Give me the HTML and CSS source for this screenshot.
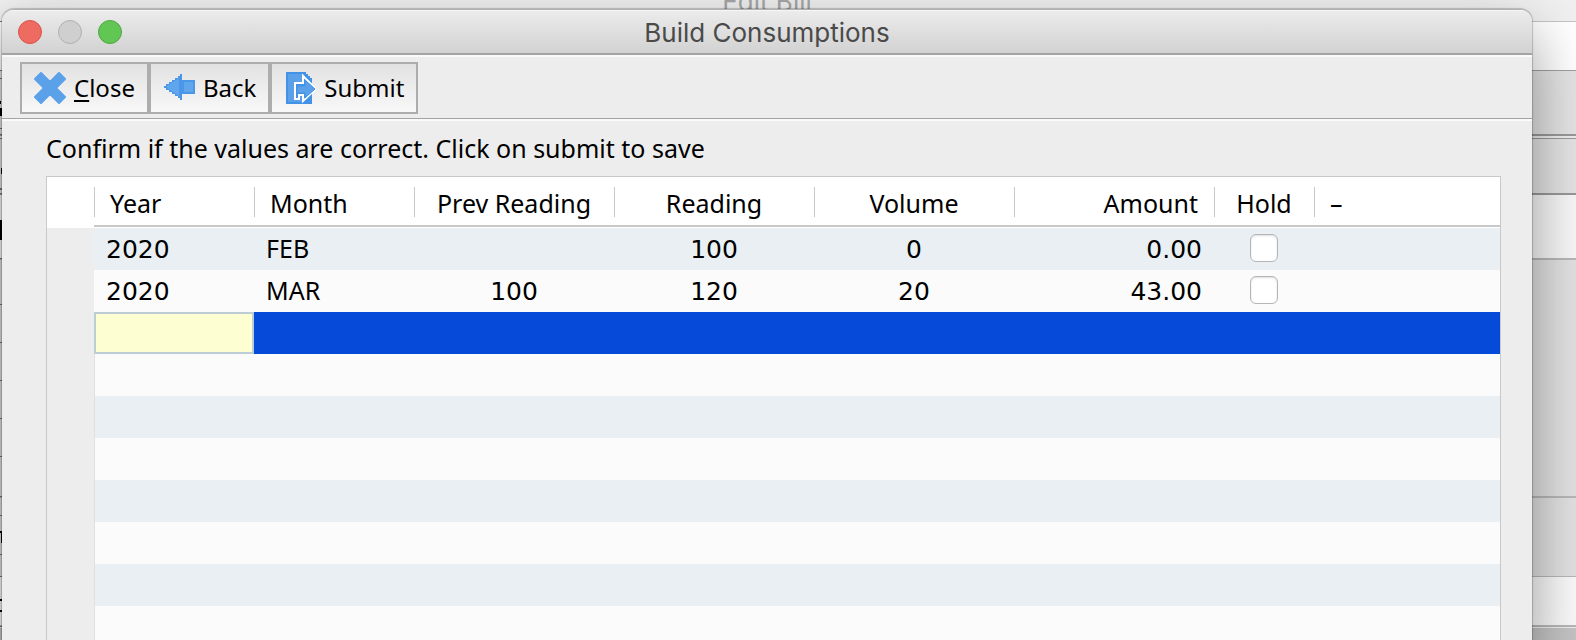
FILE: index.html
```html
<!DOCTYPE html>
<html lang="en">
<head>
<meta charset="utf-8">
<title>Build Consumptions</title>
<link rel="stylesheet" href="styles.css">
</head>
<body>
<div class="rear" aria-hidden="true">
  <div class="rear-title">Edit Bill</div>
  <div class="rear-row rear-tools"></div>
  <div class="rear-row rear-band"></div>
  <div class="rear-gap"></div>
  <div class="rear-row rear-heading"></div>
  <div class="rear-row rear-field"></div>
  <div class="rear-row rear-body"></div>
  <div class="rear-row rear-foot"></div>
  <div class="rear-row rear-entry"></div>
  <div class="rear-end"></div>
  <svg class="rear-marks" width="2" height="640" viewBox="0 0 2 640">
    <path fill="#777" d="M0 21h2v1H0zM0 70h2v1H0zM0 78h2v1H0zM0 128h2v1H0zM0 134h2v1H0zM0 138h2v1H0zM0 188h2v2H0zM0 193h2v1H0zM0 258h2v1H0zM0 304h2v1H0zM0 342h2v1H0zM0 380h2v1H0zM0 418h2v1H0zM0 456h2v1H0zM0 496h2v1H0zM0 515h2v1H0zM0 554h2v1H0zM0 576h2v1H0zM0 626h2v1H0z"/>
    <path fill="#000" d="M0 101h1v3H0zM0 108h2v8H0zM1 168h1v6H1zM0 220h2v20H0zM0 531h2v2H0zM1 533h1v10H1zM0 599h2v2H0zM0 610h2v2H0z"/>
  </svg>
</div>

<main class="dialog">
  <header class="titlebar">
    <div class="lights">
      <button class="light red" type="button" aria-label="Close window"></button>
      <button class="light idle" type="button" aria-label="Minimize" disabled></button>
      <button class="light green" type="button" aria-label="Zoom window"></button>
    </div>
    <h1 class="title">Build Consumptions</h1>
  </header>

  <div class="toolbar">
    <button class="tool" type="button">
      <svg class="icon" width="32" height="32" viewBox="0 0 32 32" aria-hidden="true"><path fill="#5ba1ea" stroke="#5ba1ea" stroke-width="2" stroke-linejoin="round" d="M7 1l9 9 9-9 6 6-9 9 9 9-6 6-9-9-9 9-6-6 9-9-9-9z"/></svg>
      <span><u>C</u>lose</span>
    </button>
    <button class="tool" type="button">
      <svg class="icon" width="32" height="32" viewBox="-1 0 32 32" aria-hidden="true"><path fill="#4a96e8" d="M0 14h2v-2h3v-2h3V8h3V6h3V4h2V2h2v6h13v14H18v6h-2v-2h-2v-2h-3v-2H8v-2H5v-2H2v-2H0z"/><path fill="#5fa6ed" d="M3 14l12-8v18L3 16zM20 10h9v10h-9z"/></svg>
      <span>Back</span>
    </button>
    <button class="tool" type="button">
      <svg class="icon" width="32" height="32" viewBox="-2 0 32 32" aria-hidden="true"><path fill="#4293e8" d="M0 0h20v2h2v2h2v2h2v26H0z"/><path fill="#5ba1ea" d="M2 2h16v28H2z"/><path fill="#4293e8" stroke="#fff" stroke-width="2" d="M9 27V11h8V4l13 13-13 12v-6h-4v4z"/><path fill="#5ba1ea" stroke="#4293e8" stroke-width="1" d="M11 14h8V8l10 9-10 9v-5h-8z"/></svg>
      <span>Submit</span>
    </button>
  </div>

  <section class="content">
    <p class="message">Confirm if the values are correct. Click on submit to save</p>
    <div class="grid">
      <table class="records">
        <colgroup>
          <col class="c-gutter"><col class="c-date"><col class="c-date"><col class="c-num"><col class="c-num"><col class="c-num"><col class="c-num"><col class="c-hold"><col>
        </colgroup>
        <thead>
          <tr>
            <td class="corner"></td>
            <th scope="col">Year</th>
            <th scope="col">Month</th>
            <th scope="col" class="center">Prev Reading</th>
            <th scope="col" class="center">Reading</th>
            <th scope="col" class="center">Volume</th>
            <th scope="col" class="right">Amount</th>
            <th scope="col" class="center hold">Hold</th>
            <th scope="col">–</th>
          </tr>
        </thead>
        <tbody>
          <tr>
            <td class="gutter"></td><td class="num">2020</td><td>FEB</td><td></td><td class="num center">100</td><td class="num center">0</td><td class="num right">0.00</td>
            <td class="center hold"><input class="check" type="checkbox" aria-label="Hold FEB 2020"></td><td></td>
          </tr>
          <tr>
            <td class="gutter"></td><td class="num">2020</td><td>MAR</td><td class="num center">100</td><td class="num center">120</td><td class="num center">20</td><td class="num right">43.00</td>
            <td class="center hold"><input class="check" type="checkbox" aria-label="Hold MAR 2020"></td><td></td>
          </tr>
          <tr class="selected">
            <td class="gutter"></td><td class="edit"><input class="year" type="text" aria-label="Year"></td><td colspan="7"></td>
          </tr>
          <tr><td class="gutter"></td><td class="blank" colspan="8"></td></tr>
          <tr><td class="gutter"></td><td class="blank" colspan="8"></td></tr>
          <tr><td class="gutter"></td><td class="blank" colspan="8"></td></tr>
          <tr><td class="gutter"></td><td class="blank" colspan="8"></td></tr>
          <tr><td class="gutter"></td><td class="blank" colspan="8"></td></tr>
          <tr><td class="gutter"></td><td class="blank" colspan="8"></td></tr>
          <tr><td class="gutter"></td><td class="blank" colspan="8"></td></tr>
        </tbody>
      </table>
    </div>
  </section>
</main>
</body>
</html>
```

FILE: styles.css
```css
* { box-sizing: border-box; }

body {
  margin: 0;
  min-height: 100vh;
  overflow: hidden;
  display: flex;
  background: #dedede;
  color: #000;
  font-family: "Noto Sans", "Open Sans", sans-serif;
  font-size: 25px;
  line-height: 32px;
}

/* window behind the dialog */
.rear {
  position: absolute;
  inset: 0;
  overflow: hidden;
  display: flex;
  flex-direction: column;
  background: #dedede;
}
.rear-title {
  height: 22px;
  flex: none;
  display: flex;
  align-items: flex-end;
  justify-content: center;
  padding-right: 42px;
  padding-bottom: 3px;
  border-bottom: 1px solid #c4c4c4;
  background: #f0f0f0;
  color: #a6a6a6;
  font-family: Inter, Roboto, sans-serif;
  font-size: 26px;
}
.rear-row { flex: none; border-bottom: 2px solid #b8b8b8; }
.rear-tools { height: 49px; background: #fff; border-bottom: 1px solid #a0a0a0; }
.rear-band { height: 65px; background: #e4e4e4; border-bottom-color: #999; }
.rear-gap { height: 3px; flex: none; background: #eee; border-bottom: 1px solid #999; }
.rear-heading { height: 56px; background: #e4e4e4; border-bottom-color: #999; }
.rear-field { height: 65px; background: #f8f8f8; }
.rear-body { height: 238px; background: #e2e2e2; }
.rear-foot { height: 79px; background: #e2e2e2; border-bottom-width: 1px; }
.rear-entry { height: 50px; background: #fafafa; }
.rear-end { flex: 1; background: #c4c4c4; border-top: 1px solid #eee; }
.rear-marks { position: absolute; left: 0; top: 0; }

/* dialog */
.dialog {
  position: relative;
  flex: 1;
  min-width: 0;
  height: 100vh;
  overflow: hidden;
  margin: 9px 44px 0 2px;
  display: flex;
  flex-direction: column;
  border-top: 1px solid #b0b0b0;
  border-radius: 12px 12px 0 0;
  background: #ededed;
  box-shadow: 0 0 1px 1px rgba(0, 0, 0, 0.2), 0 24px 60px rgba(0, 0, 0, 0.4);
}
.titlebar {
  flex: none;
  display: grid;
  grid-template-columns: 1fr auto 1fr;
  align-items: center;
  height: 45px;
  padding: 0 16px;
  border-bottom: 2px solid #a3a3a3;
  background: linear-gradient(#ececec, #d2d2d2);
  box-shadow: inset 0 1px #f6f6f6;
}
.lights { display: flex; gap: 16px; }
.light {
  width: 24px;
  height: 24px;
  padding: 0;
  border: 1px solid #d9534a;
  border-radius: 50%;
  background: #ed6b60;
}
.idle { border-color: #b0b0b0; background: #cfcfcf; }
.green { border-color: #4fa73f; background: #62c655; }
.title {
  margin: 0;
  padding-top: 2px;
  color: #4a4a4a;
  font-family: Inter, Roboto, sans-serif;
  font-size: 26px;
  font-weight: 400;
}

.toolbar {
  flex: none;
  display: flex;
  padding: 7px 18px 4px;
  border-bottom: 1px solid #a3a3a3;
  box-shadow: inset 0 2px #fafafa, 0 2px #fafafa;
}
.tool {
  display: flex;
  align-items: center;
  gap: 8px;
  height: 52px;
  padding: 0 12px;
  border: 2px solid #adadad;
  background: linear-gradient(#e2e2e2, #f8f8f8);
  color: #000;
  font: inherit;
  font-size: 24px;
}
.icon { flex: none; }
.tool u { text-decoration-thickness: 2px; text-underline-offset: 3px; }

.content {
  flex: 1;
  display: flex;
  flex-direction: column;
  padding: 13px 31px 0 44px;
}
.message { margin: 0 0 12px; }
.grid {
  flex: 1;
  border: 1px solid #c9c9c9;
  border-bottom: 0;
}
.records {
  width: 100%;
  table-layout: fixed;
  border-spacing: 0;
}
.c-gutter { width: 47px; }
.c-date { width: 160px; }
.c-num { width: 200px; }
.c-hold { width: 100px; }
.records th, .records td {
  height: 42px;
  padding: 0 12px 2px;
  text-align: left;
  font-weight: 400;
}
.records thead th, .records .corner { height: 51px; background: #fff; }
.records thead th {
  padding: 0 16px;
  background:
    linear-gradient(#c8c8c8, #c8c8c8) 0 10px / 1px 30px no-repeat,
    linear-gradient(#c8c8c8, #c8c8c8) 0 48px / 100% 2px no-repeat,
    #fff;
}
.records td.num {
  padding-top: 2px;
  padding-bottom: 0;
  font-family: "DejaVu Sans", Verdana, sans-serif;
}
.records .center { text-align: center; }
.records .right { text-align: right; }
.records .hold { padding-left: 0; padding-right: 0; }
.records tbody tr:nth-child(odd) { background: #e9eff3; }
.records tbody tr:nth-child(even) { background: #fbfbfb; }
.records tbody tr.selected { background: #064ada; }
.records td.gutter { background: #ededed; }
.records td.blank { border-left: 1px solid #e0e0e0; }
.records td.edit { padding: 0; }
.year {
  display: block;
  width: 100%;
  height: 42px;
  padding: 0 10px;
  border: 2px solid #bccdd5;
  background: #fdfed1;
  font: inherit;
}
.check {
  appearance: none;
  display: block;
  width: 28px;
  height: 28px;
  margin: 0 auto;
  border: 1px solid #b5b5b5;
  border-radius: 6px;
  background: #fff;
  box-shadow: inset 0 1px 2px #ddd;
}
```
